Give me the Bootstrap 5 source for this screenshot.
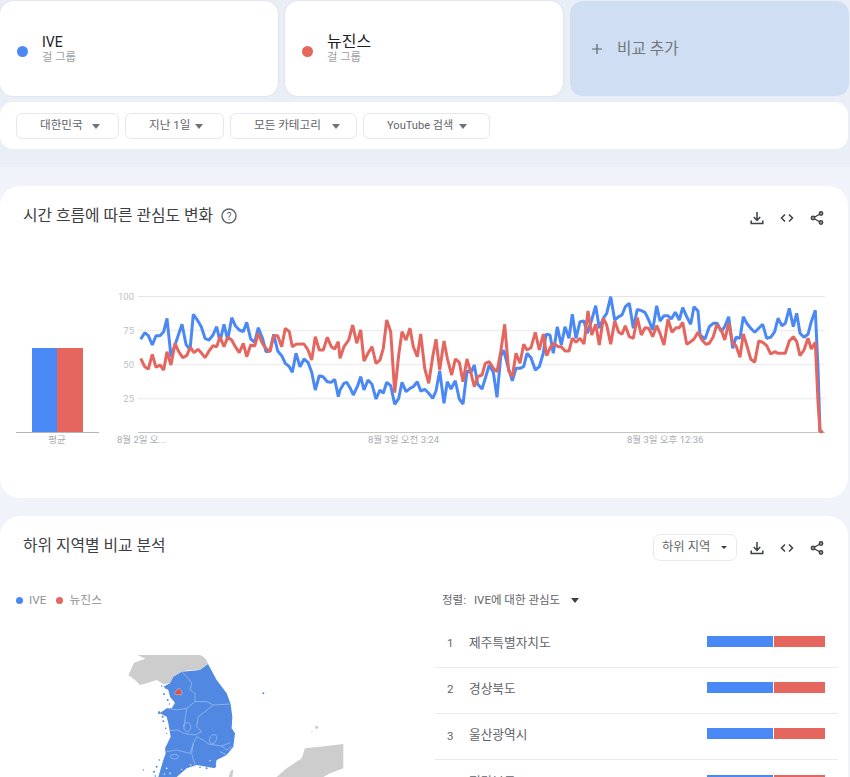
<!DOCTYPE html>
<html lang="ko">
<head>
    <meta charset="UTF-8">
    <meta name="viewport" content="width=device-width, initial-scale=1.0">
    <title>Google Trends</title>
    <link href="https://cdn.jsdelivr.net/npm/bootstrap@5.3.0/dist/css/bootstrap.min.css" rel="stylesheet">
    <style>
        html, body {
            height: 777px;
            overflow: hidden;
        }
        body {
            background-color: #f0f3f9;
            font-family: Roboto, "Noto Sans CJK KR", sans-serif;
            color: #3c4043;
        }
        .top-band {
            background-color: #e9eef7;
            height: 167px;
            padding-top: 1px;
        }
        .term-row {
            height: 95px;
        }
        .term-box {
            flex: 0 0 278px;
            background-color: #fff;
            border-radius: 13px;
            box-shadow: 0 0 2px rgba(60, 64, 67, .15);
            padding-left: 17px;
            margin-right: 7px;
        }
        .term-add {
            flex: 0 0 279px;
            background-color: #d0def4;
            box-shadow: none;
            padding-left: 21px;
            margin-right: 0;
            color: #74787c;
            font-size: 15.7px;
        }
        .term-add svg { margin-right: 14px; }
        .term-dot {
            width: 11px;
            height: 11px;
            border-radius: 50%;
            margin-right: 14px;
            margin-top: 6px;
        }
        .dot-blue { background-color: #4a88f5; }
        .dot-red { background-color: #e4665f; }
        .term-name {
            font-size: 14px;
            line-height: 18px;
            color: #202124;
        }
        .term-name-ko { font-size: 16px; }
        .term-kind {
            font-size: 11.3px;
            line-height: 14px;
            color: #9aa0a6;
        }
        .filter-bar {
            background-color: #fff;
            height: 47px;
            margin: 6px 2px 0 0;
            border-radius: 13px;
            padding-left: 16px;
            gap: 6px;
        }
        .filter-pill {
            height: 26px;
            border: 1px solid #e6e8eb;
            border-radius: 6px;
            background-color: #fff;
            font-size: 11.6px;
            color: #5f6368;
            padding: 1px 18px 0 23px;
        }
        .pill-a { width: 103px; }
        .pill-b { width: 99px; padding-right: 20px; }
        .pill-c { width: 127px; padding-right: 16px; }
        .pill-d { width: 127px; padding-right: 22px; font-size: 11.1px; }
        .tri-down {
            width: 0;
            height: 0;
            border-left: 4.5px solid transparent;
            border-right: 4.5px solid transparent;
            border-top: 5px solid #6f7377;
        }
        .panel {
            background-color: #fff;
            border-radius: 20px;
            margin: 19px 2px 0 0;
            overflow: hidden;
        }
        .panel-trend { height: 312px; }
        .panel-region { height: 300px; margin-top: 18px; }
        .panel-head {
            height: 60px;
            padding: 0 24px 0 23px;
        }
        .panel-title {
            font-size: 15.8px;
            color: #3c4043;
            margin: 1px 0 0;
            font-weight: 400;
        }
        .head-icons { gap: 16px; margin-top: 3px; }
        .head-icons svg { display: block; }
        .region-select {
            width: 84px;
            height: 27px;
            border: 1px solid #e8eaed;
            border-radius: 7px;
            font-size: 12.3px;
            color: #5f6368;
            padding: 0 9px 0 8px;
            margin: 2px 13px 0 0;
        }
        .tri-small {
            border-left-width: 3px;
            border-right-width: 3px;
            border-top: 3.5px solid #3c4043;
        }
        .trend-chart {
            display: block;
        }
        .trend-chart text {
            font-family: Roboto, "Noto Sans CJK KR", sans-serif;
            font-size: 9.5px;
        }
        .region-left { width: 435px; }
        .region-right { width: 403px; }
        .legend-row {
            height: 48px;
            padding: 1px 0 0 16px;
            font-size: 11.8px;
            color: #8f9397;
        }
        .legend-dot {
            width: 7px;
            height: 7px;
            border-radius: 50%;
            margin-right: 6px;
        }
        .legend-gap { margin-right: 10px; }
        .region-map {
            display: block;
            margin: 31px 0 0 100px;
        }
        .sort-row {
            height: 45.5px;
            padding: 4px 0 0 7px;
            font-size: 11.5px;
            color: #5f6368;
        }
        .sort-label { margin-right: 8px; }
        .sort-tri {
            border-left-width: 4px;
            border-right-width: 4px;
            border-top: 5px solid #3c4043;
            margin-left: 11px;
        }
        .geo-row {
            height: 46.3px;
            padding: 0 13px 6px 12px;
            border-color: #e8eaed;
            font-size: 12.7px;
            color: #5f6368;
        }
        .geo-rank {
            width: 22px;
            font-size: 11.5px;
            color: #5f6368;
            margin-top: 5px;
        }
        .geo-name {
            flex-grow: 1;
            margin-top: 2px;
        }
        .geo-bars {
            width: 118px;
            height: 11px;
            gap: 1px;
        }
        .bar-blue { width: 66px; background-color: #4a88f5; }
        .bar-red { width: 51px; background-color: #e4665f; }
    </style>
</head>
<body>
    <div class="top-band">
        <div class="d-flex term-row">
            <div class="term-box d-flex align-items-center">
                <span class="term-dot dot-blue"></span>
                <div>
                    <div class="term-name">IVE</div>
                    <div class="term-kind">걸 그룹</div>
                </div>
            </div>
            <div class="term-box d-flex align-items-center">
                <span class="term-dot dot-red"></span>
                <div>
                    <div class="term-name term-name-ko">뉴진스</div>
                    <div class="term-kind">걸 그룹</div>
                </div>
            </div>
            <div class="term-box term-add d-flex align-items-center">
                <svg width="12" height="12" viewBox="0 0 12 12"><path d="M6 1v10M1 6h10" stroke="#5f6368" stroke-width="1.2" fill="none"/></svg>
                <span>비교 추가</span>
            </div>
        </div>
        <div class="filter-bar d-flex align-items-center">
            <div class="filter-pill pill-a d-flex align-items-center justify-content-between"><span>대한민국</span><span class="tri-down"></span></div>
            <div class="filter-pill pill-b d-flex align-items-center justify-content-between"><span>지난 1일</span><span class="tri-down"></span></div>
            <div class="filter-pill pill-c d-flex align-items-center justify-content-between"><span>모든 카테고리</span><span class="tri-down"></span></div>
            <div class="filter-pill pill-d d-flex align-items-center justify-content-between"><span>YouTube 검색</span><span class="tri-down"></span></div>
        </div>
    </div>

    <div class="panel panel-trend">
        <div class="panel-head d-flex align-items-center justify-content-between">
            <div class="d-flex align-items-center gap-2">
                <h2 class="panel-title">시간 흐름에 따른 관심도 변화</h2>
                <svg width="16" height="16" viewBox="0 0 16 16">
                    <circle cx="8" cy="8" r="7" fill="none" stroke="#5f6368" stroke-width="1.4"/>
                    <text x="8" y="11.5" text-anchor="middle" font-size="10" fill="#5f6368" font-family="Roboto">?</text>
                </svg>
            </div>
            <div class="head-icons d-flex align-items-center">
                <svg width="14" height="14" viewBox="0 0 14 14"><path d="M7 1v8M3.8 6l3.2 3.4L10.2 6M1.2 9.5v3h11.6v-3" fill="none" stroke="#3c4043" stroke-width="1.5"/></svg>
                <svg width="14" height="14" viewBox="0 0 14 14"><path d="M5 3.5L1.5 7 5 10.5M9 3.5L12.5 7 9 10.5" fill="none" stroke="#3c4043" stroke-width="1.5"/></svg>
                <svg width="14" height="14" viewBox="0 0 14 14"><path d="M11 2.5L3 7l8 4.5" fill="none" stroke="#3c4043" stroke-width="1.3"/><circle cx="11" cy="2.5" r="1.8" fill="#8a8d90" stroke="#3c4043" stroke-width="1.2"/><circle cx="3" cy="7" r="1.8" fill="#8a8d90" stroke="#3c4043" stroke-width="1.2"/><circle cx="11" cy="11.5" r="1.8" fill="#8a8d90" stroke="#3c4043" stroke-width="1.2"/></svg>
            </div>
        </div>
        <svg class="trend-chart" width="848" height="252" viewBox="0 246 848 252">
            <line x1="138" x2="825" y1="296.5" y2="296.5" stroke="#e6e6e6"/>
            <line x1="138" x2="825" y1="330.5" y2="330.5" stroke="#eee" stroke-width="1.4"/>
            <line x1="138" x2="825" y1="364.5" y2="364.5" stroke="#eee" stroke-width="1.4"/>
            <line x1="138" x2="825" y1="398.5" y2="398.5" stroke="#eee" stroke-width="1.4"/>
            <g fill="#bcbfc6" text-anchor="end">
                <text x="134" y="300">100</text>
                <text x="134" y="334">75</text>
                <text x="134" y="368">50</text>
                <text x="134" y="402">25</text>
            </g>
            <rect x="32" y="348" width="25" height="84.5" fill="#4a88f5"/>
            <rect x="57" y="348" width="26" height="84.5" fill="#e4665f"/>
            <line x1="16" x2="99" y1="432.5" y2="432.5" stroke="#b5b5b5"/>
            <line x1="138" x2="825" y1="432.5" y2="432.5" stroke="#c4c4c4"/>
            <polyline id="lineBlue" fill="none" stroke="#4a88f5" stroke-width="3" stroke-linejoin="bevel"/>
            <polyline id="lineRed" fill="none" stroke="#e4665f" stroke-width="3" stroke-linejoin="bevel"/>
            <g fill="#a9acb2">
                <text x="57" y="443" text-anchor="middle">평균</text>
                <text x="117" y="443">8월 2일 오...</text>
                <text x="368" y="443">8월 3일 오전 3:24</text>
                <text x="627" y="443">8월 3일 오후 12:36</text>
            </g>
        </svg>
    </div>

    <div class="panel panel-region">
        <div class="panel-head d-flex align-items-center justify-content-between">
            <h2 class="panel-title">하위 지역별 비교 분석</h2>
            <div class="d-flex align-items-center">
                <div class="region-select d-flex align-items-center justify-content-between"><span>하위 지역</span><span class="tri-down tri-small"></span></div>
                <div class="head-icons d-flex align-items-center">
                    <svg width="14" height="14" viewBox="0 0 14 14"><path d="M7 1v8M3.8 6l3.2 3.4L10.2 6M1.2 9.5v3h11.6v-3" fill="none" stroke="#3c4043" stroke-width="1.5"/></svg>
                    <svg width="14" height="14" viewBox="0 0 14 14"><path d="M5 3.5L1.5 7 5 10.5M9 3.5L12.5 7 9 10.5" fill="none" stroke="#3c4043" stroke-width="1.5"/></svg>
                    <svg width="14" height="14" viewBox="0 0 14 14"><path d="M11 2.5L3 7l8 4.5" fill="none" stroke="#3c4043" stroke-width="1.3"/><circle cx="11" cy="2.5" r="1.8" fill="#8a8d90" stroke="#3c4043" stroke-width="1.2"/><circle cx="3" cy="7" r="1.8" fill="#8a8d90" stroke="#3c4043" stroke-width="1.2"/><circle cx="11" cy="11.5" r="1.8" fill="#8a8d90" stroke="#3c4043" stroke-width="1.2"/></svg>
                </div>
            </div>
        </div>
        <div class="d-flex">
            <div class="region-left">
                <div class="legend-row d-flex align-items-center">
                    <span class="legend-dot dot-blue"></span><span class="legend-gap">IVE</span>
                    <span class="legend-dot dot-red"></span><span>뉴진스</span>
                </div>
                <svg class="region-map" width="245" height="122" viewBox="300 405 735 366">
                    <path fill="#cdcdcd" d="M412 405L600 405Q620 412 624 432L600 450Q570 448 545 455L520 470L510 490L490 492L470 480L440 490L420 495L405 480L385 465L395 445L402 428L436 416Z"/>
                    <path fill="#cdcdcd" d="M830 771L860 745L905 715L915 685L960 680L1030 672V745L990 760L970 771Z"/>
                    <path fill="#cdcdcd" d="M686 771L692 752L700 748L697 771Z"/>
                    <path fill="#e3e3e3" d="M235 532L245 528L241 545L238 566L235 560Z"/>
                    <circle cx="950" cy="622" r="5" fill="#cdcdcd"/>
                    <circle cx="935" cy="635" r="2.5" fill="#e0e0e0"/>
                    <path fill="#5088e2" d="M624 432L650 480L680 520L692 552L697 590L695 625L705 640L700 680L680 705L650 720L645 745L590 735L560 745L530 771L475 771L490 720L497 700L495 685L512 650L505 610L500 590L480 580L500 565L515 565L525 548L510 530L505 510L490 500L510 490L520 470L545 455L600 450Z"/>
                    <g fill="#5088e2">
                        <circle cx="790" cy="520" r="3"/>
                        <circle cx="478" cy="578" r="4"/><circle cx="488" cy="590" r="3"/><circle cx="490" cy="604" r="3"/><circle cx="497" cy="625" r="2.5"/><circle cx="500" cy="640" r="2"/>
                        <circle cx="492" cy="522" r="3"/><circle cx="503" cy="540" r="3"/><circle cx="498" cy="505" r="2.5"/><circle cx="485" cy="498" r="2"/><circle cx="508" cy="552" r="2"/>
                        <circle cx="470" cy="740" r="3"/><circle cx="462" cy="755" r="3"/><circle cx="430" cy="750" r="2"/><circle cx="478" cy="720" r="2.5"/><circle cx="466" cy="768" r="2.5"/>
                        <circle cx="620" cy="745" r="3"/><circle cx="645" cy="738" r="4"/><circle cx="600" cy="742" r="2.5"/><circle cx="695" cy="645" r="3"/>
                    </g>
                    <g fill="#fff">
                        <circle cx="500" cy="745" r="2.5"/><circle cx="510" cy="760" r="2.5"/><circle cx="493" cy="762" r="2"/><circle cx="572" cy="735" r="2"/><circle cx="545" cy="748" r="2"/><circle cx="630" cy="722" r="2"/>
                    </g>
                    <g fill="none" stroke="#a9c4f0" stroke-width="2">
                        <path d="M545 455L565 475L575 490L570 510L585 520L585 545L560 565"/>
                        <path d="M585 545L620 545L640 555L690 552"/>
                        <path d="M505 565L530 570L560 565L555 600L552 622"/>
                        <path d="M640 555L615 575L595 590L590 620L605 635L585 645"/>
                        <path d="M552 622C545 608 570 600 572 618C575 640 550 640 552 622Z"/>
                        <path d="M507 632L535 630L550 640L585 645"/>
                        <path d="M500 695L530 690L570 700L580 670L590 650"/>
                        <path d="M590 650L610 660L625 672L665 678L690 668"/>
                        <path d="M630 668C622 650 645 635 650 650C652 662 640 678 630 668Z"/>
                        <path d="M580 670L575 700L585 735"/>
                        <path d="M665 678L680 690L695 680M660 695L680 705"/>
                        <ellipse cx="523" cy="710" rx="12" ry="7"/>
                    </g>
                    <path fill="#d9544f" stroke="#c8d6f2" stroke-width="1.5" d="M523 519L536 504L546 515L546 524L526 524Z"/>
                </svg>
            </div>
            <div class="region-right">
                <div class="sort-row d-flex align-items-center">
                    <span class="sort-label">정렬:</span><span>IVE에 대한 관심도</span><span class="tri-down sort-tri"></span>
                </div>
                <div class="list-group list-group-flush">
                    <div class="list-group-item geo-row d-flex align-items-center bg-transparent"><span class="geo-rank">1</span><span class="geo-name">제주특별자치도</span><div class="geo-bars d-flex"><span class="bar-blue"></span><span class="bar-red"></span></div></div>
                    <div class="list-group-item geo-row d-flex align-items-center bg-transparent"><span class="geo-rank">2</span><span class="geo-name">경상북도</span><div class="geo-bars d-flex"><span class="bar-blue"></span><span class="bar-red"></span></div></div>
                    <div class="list-group-item geo-row d-flex align-items-center bg-transparent"><span class="geo-rank">3</span><span class="geo-name">울산광역시</span><div class="geo-bars d-flex"><span class="bar-blue"></span><span class="bar-red"></span></div></div>
                    <div class="list-group-item geo-row d-flex align-items-center bg-transparent"><span class="geo-rank">4</span><span class="geo-name">전라북도</span><div class="geo-bars d-flex"><span class="bar-blue"></span><span class="bar-red"></span></div></div>
                </div>
            </div>
        </div>
    </div>

    <script src="https://cdn.jsdelivr.net/npm/bootstrap@5.3.0/dist/js/bootstrap.bundle.min.js"></script>
    <script>
        // Series traced in three stretches, each with its own scale offset
        const blueA = [92,163,104,143,115,152,127,180,138,152,150,152,161,140,171,100,183,215,195,180,216,118,228,178,240,195,250,88,262,105,274,125,285,160,297,165,309,150,320,125,330,170,342,118,353,165,365,98,376,122,388,135,400,140,410,112,422,162,434,172,445,128,457,158,468,200,480,198,491,148,503,198,515,212,526,235,538,245,547,262,558,205,570,245,582,222,594,232,605,262,616,315,628,272,640,276,652,290,664,292,674,283,685,335];
        const blueB = [0,315,12,295,20,292,30,308,40,330,52,305,62,275,72,315,84,285,96,298,108,342,120,315,130,325,140,292,152,302,164,358,176,340,186,292,198,320,210,310,220,305,232,290,242,318,254,313,266,325,278,340,288,318,299,258,312,355,322,290,333,312,346,287,358,342,369,357,381,258,393,262,403,240,413,298,426,312,436,280,448,240,460,262,471,337,482,215,491,195,504,245,517,287,528,250,540,250,551,245,561,205,573,218,586,255,598,245,610,205,618,148,630,150,640,205,652,125,664,180,675,125,687,160,697,88,708,160];
        const blueC = [0,110,12,108,22,145,35,105,47,62,58,130,70,100,80,85,92,35,104,105,116,95,126,90,136,65,148,55,160,130,172,73,184,77,195,82,206,105,218,135,230,62,240,108,252,92,264,92,274,102,286,82,298,105,308,68,320,95,332,118,342,65,354,78,360,150,375,162,388,125,400,115,412,115,424,140,434,125,446,95,458,190,468,157,480,160,490,95,500,115,512,130,524,142,536,130,548,118,560,160,572,157,584,140,594,100,606,122,616,115,628,70,640,125,650,85,660,145,672,157,684,148,694,110,706,76,714,250,720,440];
        const redA = [92,220,104,245,115,252,127,208,138,247,150,240,161,255,171,200,183,240,195,175,206,200,218,218,230,212,241,187,252,203,264,193,275,205,285,218,297,198,309,182,320,185,330,155,342,185,353,157,365,165,376,185,388,203,400,175,410,215,422,180,434,183,445,145,457,175,468,190,480,200,491,152,503,152,515,185,526,130,538,140,547,185,558,178,570,177,582,177,594,195,605,225,616,155,628,195,640,195,652,157,664,185,674,192,685,170];
        const redB = [0,220,12,185,26,165,38,120,50,175,62,135,72,228,84,205,96,185,108,235,120,225,130,190,140,105,152,140,164,323,176,210,186,140,198,165,210,130,220,185,232,215,242,147,254,250,266,295,278,215,288,163,299,255,312,168,322,220,335,270,346,222,358,232,369,290,381,222,393,265,403,305,413,275,426,270,436,235,448,230,460,250,471,260,482,200,494,118,506,258,517,275,528,205,540,235,551,178,561,195,573,188,586,142,598,195,610,147,620,212,632,185,642,175,654,185,664,185,675,198,687,198,697,160,708,172];
        const redC = [0,160,12,177,24,78,35,150,47,118,58,180,70,100,80,120,92,178,104,108,116,142,126,148,136,122,148,155,160,160,172,98,184,150,195,128,206,130,218,155,230,122,240,145,252,180,264,103,276,142,288,128,298,128,308,112,320,178,332,170,342,162,354,142,366,165,378,178,388,175,400,155,410,120,424,135,434,165,446,115,458,175,468,182,480,217,490,147,500,180,512,222,524,232,536,168,548,172,560,182,572,207,584,200,594,205,606,205,616,205,628,168,640,155,650,170,660,212,672,195,684,160,694,192,706,172,714,350,720,440,730,440];

        function toPoints(values, originX) {
            const out = [];
            for (let i = 0; i < values.length; i += 2) {
                out.push((originX + values[i] / 3).toFixed(1) + ',' + (285 + values[i + 1] / 3).toFixed(1));
            }
            return out;
        }

        document.getElementById('lineBlue').setAttribute('points', [...toPoints(blueA, 110), ...toPoints(blueB, 340), ...toPoints(blueC, 580)].join(' '));
        document.getElementById('lineRed').setAttribute('points', [...toPoints(redA, 110), ...toPoints(redB, 340), ...toPoints(redC, 580)].join(' '));
    </script>
</body>
</html>
